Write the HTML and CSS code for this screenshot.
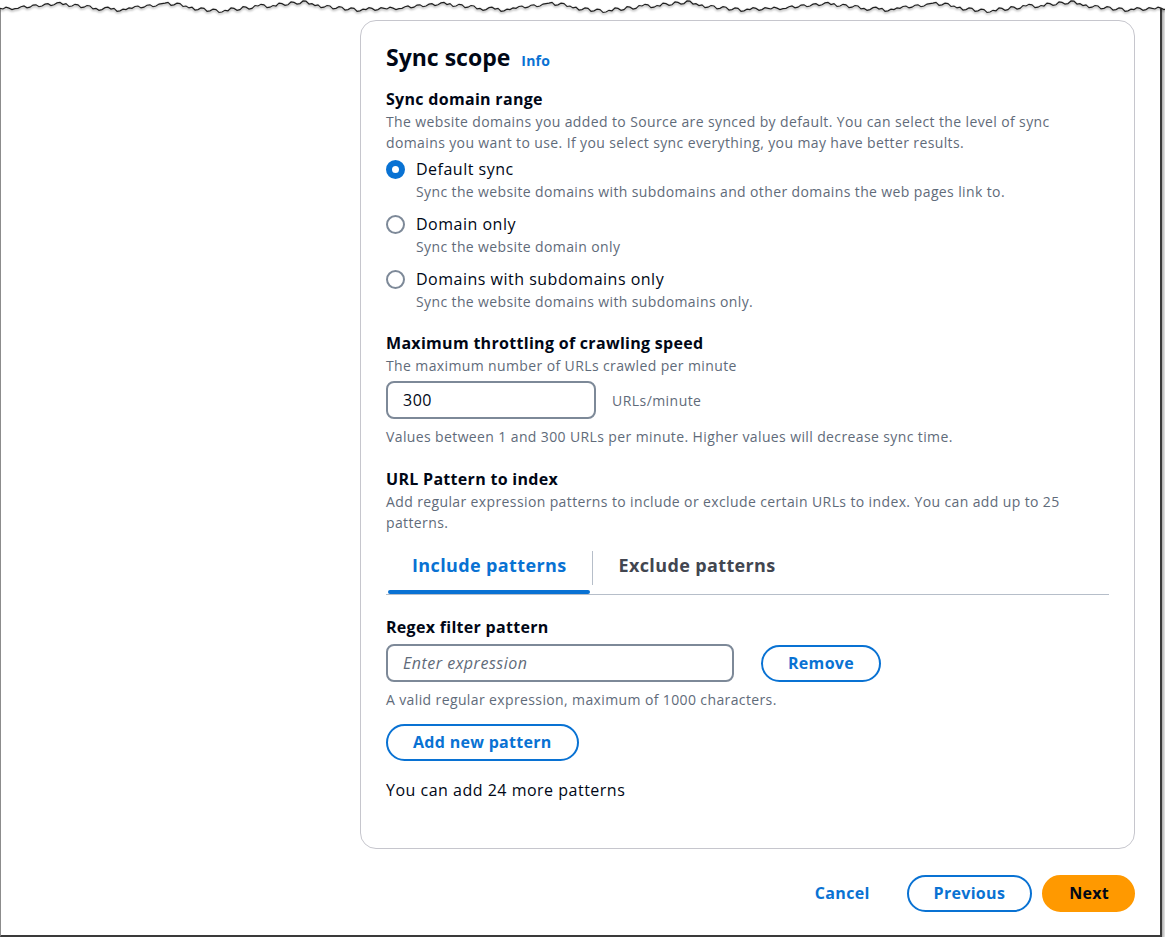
FILE: index.html
```html
<!DOCTYPE html>
<html lang="en">
<head>
<meta charset="utf-8">
<title>Sync scope</title>
<link rel="stylesheet" href="styles.css">
</head>
<body>
<div class="frame">
  <svg class="torn" viewBox="0 0 1165 16" width="1165" height="16" aria-hidden="true">
    <defs>
      <path id="edge" d="M0,7 L3,7.5 L6,6 L9,6.8 L12,8 L15,7.2 L18,7 L21,5.6 L24,5 L27,6.5 L30,6 L33,4.2 L36,4 L39,5.6 L42,5 L45,3.5 L48,3 L51,4.6 L54,4 L57,2.4 L60,2 L63,3.8 L66,3 L69,5.4 L72,5 L75,3.6 L78,4 L81,6.4 L84,6 L87,4.6 L90,5 L93,7.4 L96,7 L99,8.6 L102,8 L105,6.4 L108,6 L111,7.6 L114,7 L117,9.4 L120,9 L123,7.6 L126,8 L129,6.6 L132,7 L135,5.4 L138,5 L141,6.6 L144,6 L147,4.4 L150,4 L153,5.6 L156,5 L159,3.4 L162,3 L165,2.6 L168,2 L171,4.4 L174,4 L177,2.6 L180,3 L183,5.4 L186,5 L189,6.6 L192,6 L195,8.4 L198,8 L201,6.6 L204,7 L207,9.4 L210,9 L213,7.6 L216,8 L219,10.4 L222,10 L225,8.6 L228,9 L231,6.6 L234,7 L237,8.6 L240,8 L243,5.6 L246,6 L249,7.6 L252,7 L255,4.6 L258,5 L261,3.6 L264,4 L267,6.4 L270,6 L273,4.6 L276,5 L279,2.6 L282,3 L285,4.4 L288,4 L291,1.6 L294,2 L297,3.4 L300,3 L303,0.8 L306,1 L309,3.4 L312,3 L315,4.6 L318,4 L321,6.4 L324,6 L327,4.6 L330,5 L333,7.4 L336,7 L339,5.6 L342,6 L345,8.4 L348,8 L351,6.6 L354,7 L357,9.4 L360,9 L363,7.6 L366,8 L369,6.4 L372,7 L375,8.6 L378,8 L381,6.4 L384,7"/>
      <path id="edgefill" d="M0,7 L6,6 L12,8 L18,7 L24,5 L30,6 L36,4 L42,5 L48,3 L54,4 L60,2 L66,3 L72,5 L78,4 L84,6 L90,5 L96,7 L102,8 L108,6 L114,7 L120,9 L126,8 L132,7 L138,5 L144,6 L150,4 L156,5 L162,3 L168,2 L174,4 L180,3 L186,5 L192,6 L198,8 L204,7 L210,9 L216,8 L222,10 L228,9 L234,7 L240,8 L246,6 L252,7 L258,5 L264,4 L270,6 L276,5 L282,3 L288,4 L294,2 L300,3 L306,1 L312,3 L318,4 L324,6 L330,5 L336,7 L342,6 L348,8 L354,7 L360,9 L366,8 L372,7 L378,8 L384,7 L385,0 L0,0 Z"/>
    </defs>
    <g class="torn-fill" transform="scale(1 1.2)">
      <use href="#edgefill" x="0"/>
      <use href="#edgefill" x="384"/>
      <use href="#edgefill" x="768"/>
      <use href="#edgefill" x="1152"/>
    </g>
    <g class="torn-line" transform="scale(1 1.2)">
      <use href="#edge" x="0"/>
      <use href="#edge" x="384"/>
      <use href="#edge" x="768"/>
      <use href="#edge" x="1152"/>
    </g>
  </svg>

  <main class="page">
    <section class="card">
      <h2 class="card-title">Sync scope <a class="info" href="#">Info</a></h2>

      <div class="field">
        <h3 class="label">Sync domain range</h3>
        <p class="desc">The website domains you added to Source are synced by default. You can select the level of sync<br>domains you want to use. If you select sync everything, you may have better results.</p>
        <div class="radios">
          <div class="radio">
            <span class="radio-dot checked"></span>
            <span class="radio-label">Default sync</span>
            <span class="desc radio-desc">Sync the website domains with subdomains and other domains the web pages link to.</span>
          </div>
          <div class="radio">
            <span class="radio-dot"></span>
            <span class="radio-label">Domain only</span>
            <span class="desc radio-desc">Sync the website domain only</span>
          </div>
          <div class="radio">
            <span class="radio-dot"></span>
            <span class="radio-label">Domains with subdomains only</span>
            <span class="desc radio-desc">Sync the website domains with subdomains only.</span>
          </div>
        </div>
      </div>

      <div class="field field-gap">
        <h3 class="label">Maximum throttling of crawling speed</h3>
        <p class="desc">The maximum number of URLs crawled per minute</p>
        <div class="inline-row">
          <input class="input input-short" type="text" value="300" readonly>
          <span class="unit">URLs/minute</span>
        </div>
        <p class="desc hint">Values between 1 and 300 URLs per minute. Higher values will decrease sync time.</p>
      </div>

      <div class="field field-gap2">
        <h3 class="label">URL Pattern to index</h3>
        <p class="desc">Add regular expression patterns to include or exclude certain URLs to index. You can add up to 25<br>patterns.</p>
        <div class="tabs">
          <span class="tab active">Include patterns</span>
          <span class="tab-sep"></span>
          <span class="tab tab-second">Exclude patterns</span>
        </div>

        <h3 class="label regex-label">Regex filter pattern</h3>
        <div class="inline-row regex-row">
          <input class="input input-long" type="text" placeholder="Enter expression">
          <button class="btn" type="button">Remove</button>
        </div>
        <p class="desc hint">A valid regular expression, maximum of 1000 characters.</p>
        <button class="btn add-btn" type="button">Add new pattern</button>
        <p class="count">You can add 24 more patterns</p>
      </div>
    </section>

    <div class="actions">
      <button class="link-btn" type="button">Cancel</button>
      <button class="btn" type="button">Previous</button>
      <button class="btn primary" type="button">Next</button>
    </div>
  </main>
</div>
</body>
</html>
```

FILE: styles.css
```css
* { box-sizing: border-box; }

body {
  margin: 0;
  background: #ffffff;
  font-family: "Open Sans", "Noto Sans", Arial, sans-serif;
  color: #000716;
}

.frame {
  position: relative;
  width: 1162px;
  height: 937px;
  border-left: 1px solid #8c8c8c;
  border-right: 2px solid #3a3a3a;
  border-bottom: 2px solid #3a3a3a;
  box-shadow: 2px 2px 3px rgba(0, 0, 0, 0.35);
  padding-top: 20px;
}

.torn {
  position: absolute;
  top: 0;
  left: -1px;
  overflow: visible;
}

.torn-fill use { fill: #ffffff; }

.torn-line use {
  fill: none;
  stroke: #1e1e1e;
  stroke-width: 1;
}

.torn-line {
  filter: drop-shadow(0 1.5px 1px rgba(0, 0, 0, 0.45));
}

.page {
  margin-left: 359px;
  width: 775px;
}

.card {
  border: 1px solid #c6c6cd;
  border-radius: 16px;
  padding: 21px 25px 47px;
}

.card-title {
  margin: 0;
  display: flex;
  align-items: baseline;
  gap: 11px;
  font-size: 23px;
  line-height: 30px;
  font-weight: 700;
  letter-spacing: 0;
  color: #000716;
}

.info {
  font-size: 14px;
  font-weight: 700;
  letter-spacing: 0.2px;
  color: #0972d3;
  text-decoration: none;
}

.field { display: flex; flex-direction: column; }

.label {
  margin: 12px 0 0;
  font-size: 16px;
  line-height: 22px;
  font-weight: 700;
  letter-spacing: 0.3px;
  color: #000716;
}

.field-gap { margin-top: 8px; }
.field-gap2 { margin-top: 9px; }

.desc {
  margin: 1px 0 0;
  font-size: 14px;
  line-height: 21px;
  letter-spacing: 0.38px;
  color: #5f6b7a;
}

.radios {
  margin-top: 5px;
  display: flex;
  flex-direction: column;
  gap: 11px;
}

.radio {
  display: grid;
  grid-template-columns: 19px 1fr;
  column-gap: 11px;
}

.radio-dot {
  width: 19px;
  height: 19px;
  border-radius: 50%;
  border: 2px solid #7d8998;
  align-self: center;
  background: #fff;
}

.radio-dot.checked { border: 6px solid #0972d3; }

.radio-label {
  font-size: 16px;
  line-height: 22px;
  letter-spacing: 0.5px;
  color: #000716;
}

.radio-desc { grid-column: 2; }

.inline-row {
  display: flex;
  align-items: center;
  gap: 16px;
  margin-top: 5px;
}

.input {
  height: 38px;
  border: 2px solid #7d8998;
  border-radius: 8px;
  padding: 0 15px;
  font-family: inherit;
  font-size: 16px;
  letter-spacing: 0.5px;
  color: #000716;
  background: #fff;
  outline: none;
}

.input::placeholder {
  color: #5f6b7a;
  font-style: italic;
}

.input-short { width: 210px; }
.input-long { width: 348px; }

.unit {
  font-size: 14px;
  line-height: 21px;
  letter-spacing: 0.45px;
  color: #5f6b7a;
}

.hint { margin-top: 7px; }

.tabs {
  display: flex;
  align-items: center;
  margin-top: 8px;
  border-bottom: 1px solid #b6bec9;
}

.tab {
  position: relative;
  padding: 12px 26px 17px;
  font-size: 18px;
  line-height: 24px;
  font-weight: 700;
  letter-spacing: 0.37px;
  color: #424650;
}

.tab.active { color: #0972d3; }

.tab.active::after {
  content: "";
  position: absolute;
  left: 2px;
  right: 2px;
  bottom: 0;
  height: 4px;
  border-radius: 4px;
  background: #0972d3;
}

.tab-sep {
  width: 1px;
  height: 34px;
  background: #b6bec9;
}

.tab-second { padding-left: 25px; }

.regex-label { margin-top: 21px; }

.regex-row { gap: 27px; margin-top: 6px; }

.btn {
  height: 37px;
  border: 2px solid #0972d3;
  border-radius: 20px;
  padding: 0 25px;
  background: #ffffff;
  color: #0972d3;
  font-family: inherit;
  font-size: 16px;
  font-weight: 700;
  letter-spacing: 0.3px;
  line-height: 33px;
  cursor: pointer;
}

.add-btn {
  align-self: flex-start;
  margin-top: 14px;
}

.count {
  margin: 18px 0 0;
  font-size: 16px;
  line-height: 22px;
  letter-spacing: 0.5px;
  color: #000716;
}

.actions {
  display: flex;
  justify-content: flex-end;
  align-items: center;
  gap: 10px;
  margin-top: 26px;
}

.link-btn {
  height: 37px;
  padding: 0 27px 0 26px;
  border: 0;
  background: none;
  color: #0972d3;
  font-family: inherit;
  font-size: 16px;
  font-weight: 700;
  letter-spacing: 0.3px;
  line-height: 37px;
  cursor: pointer;
}

.btn.primary {
  padding: 0 24px 0 25px;
  background: #ff9900;
  border-color: #ff9900;
  color: #000716;
}
```
